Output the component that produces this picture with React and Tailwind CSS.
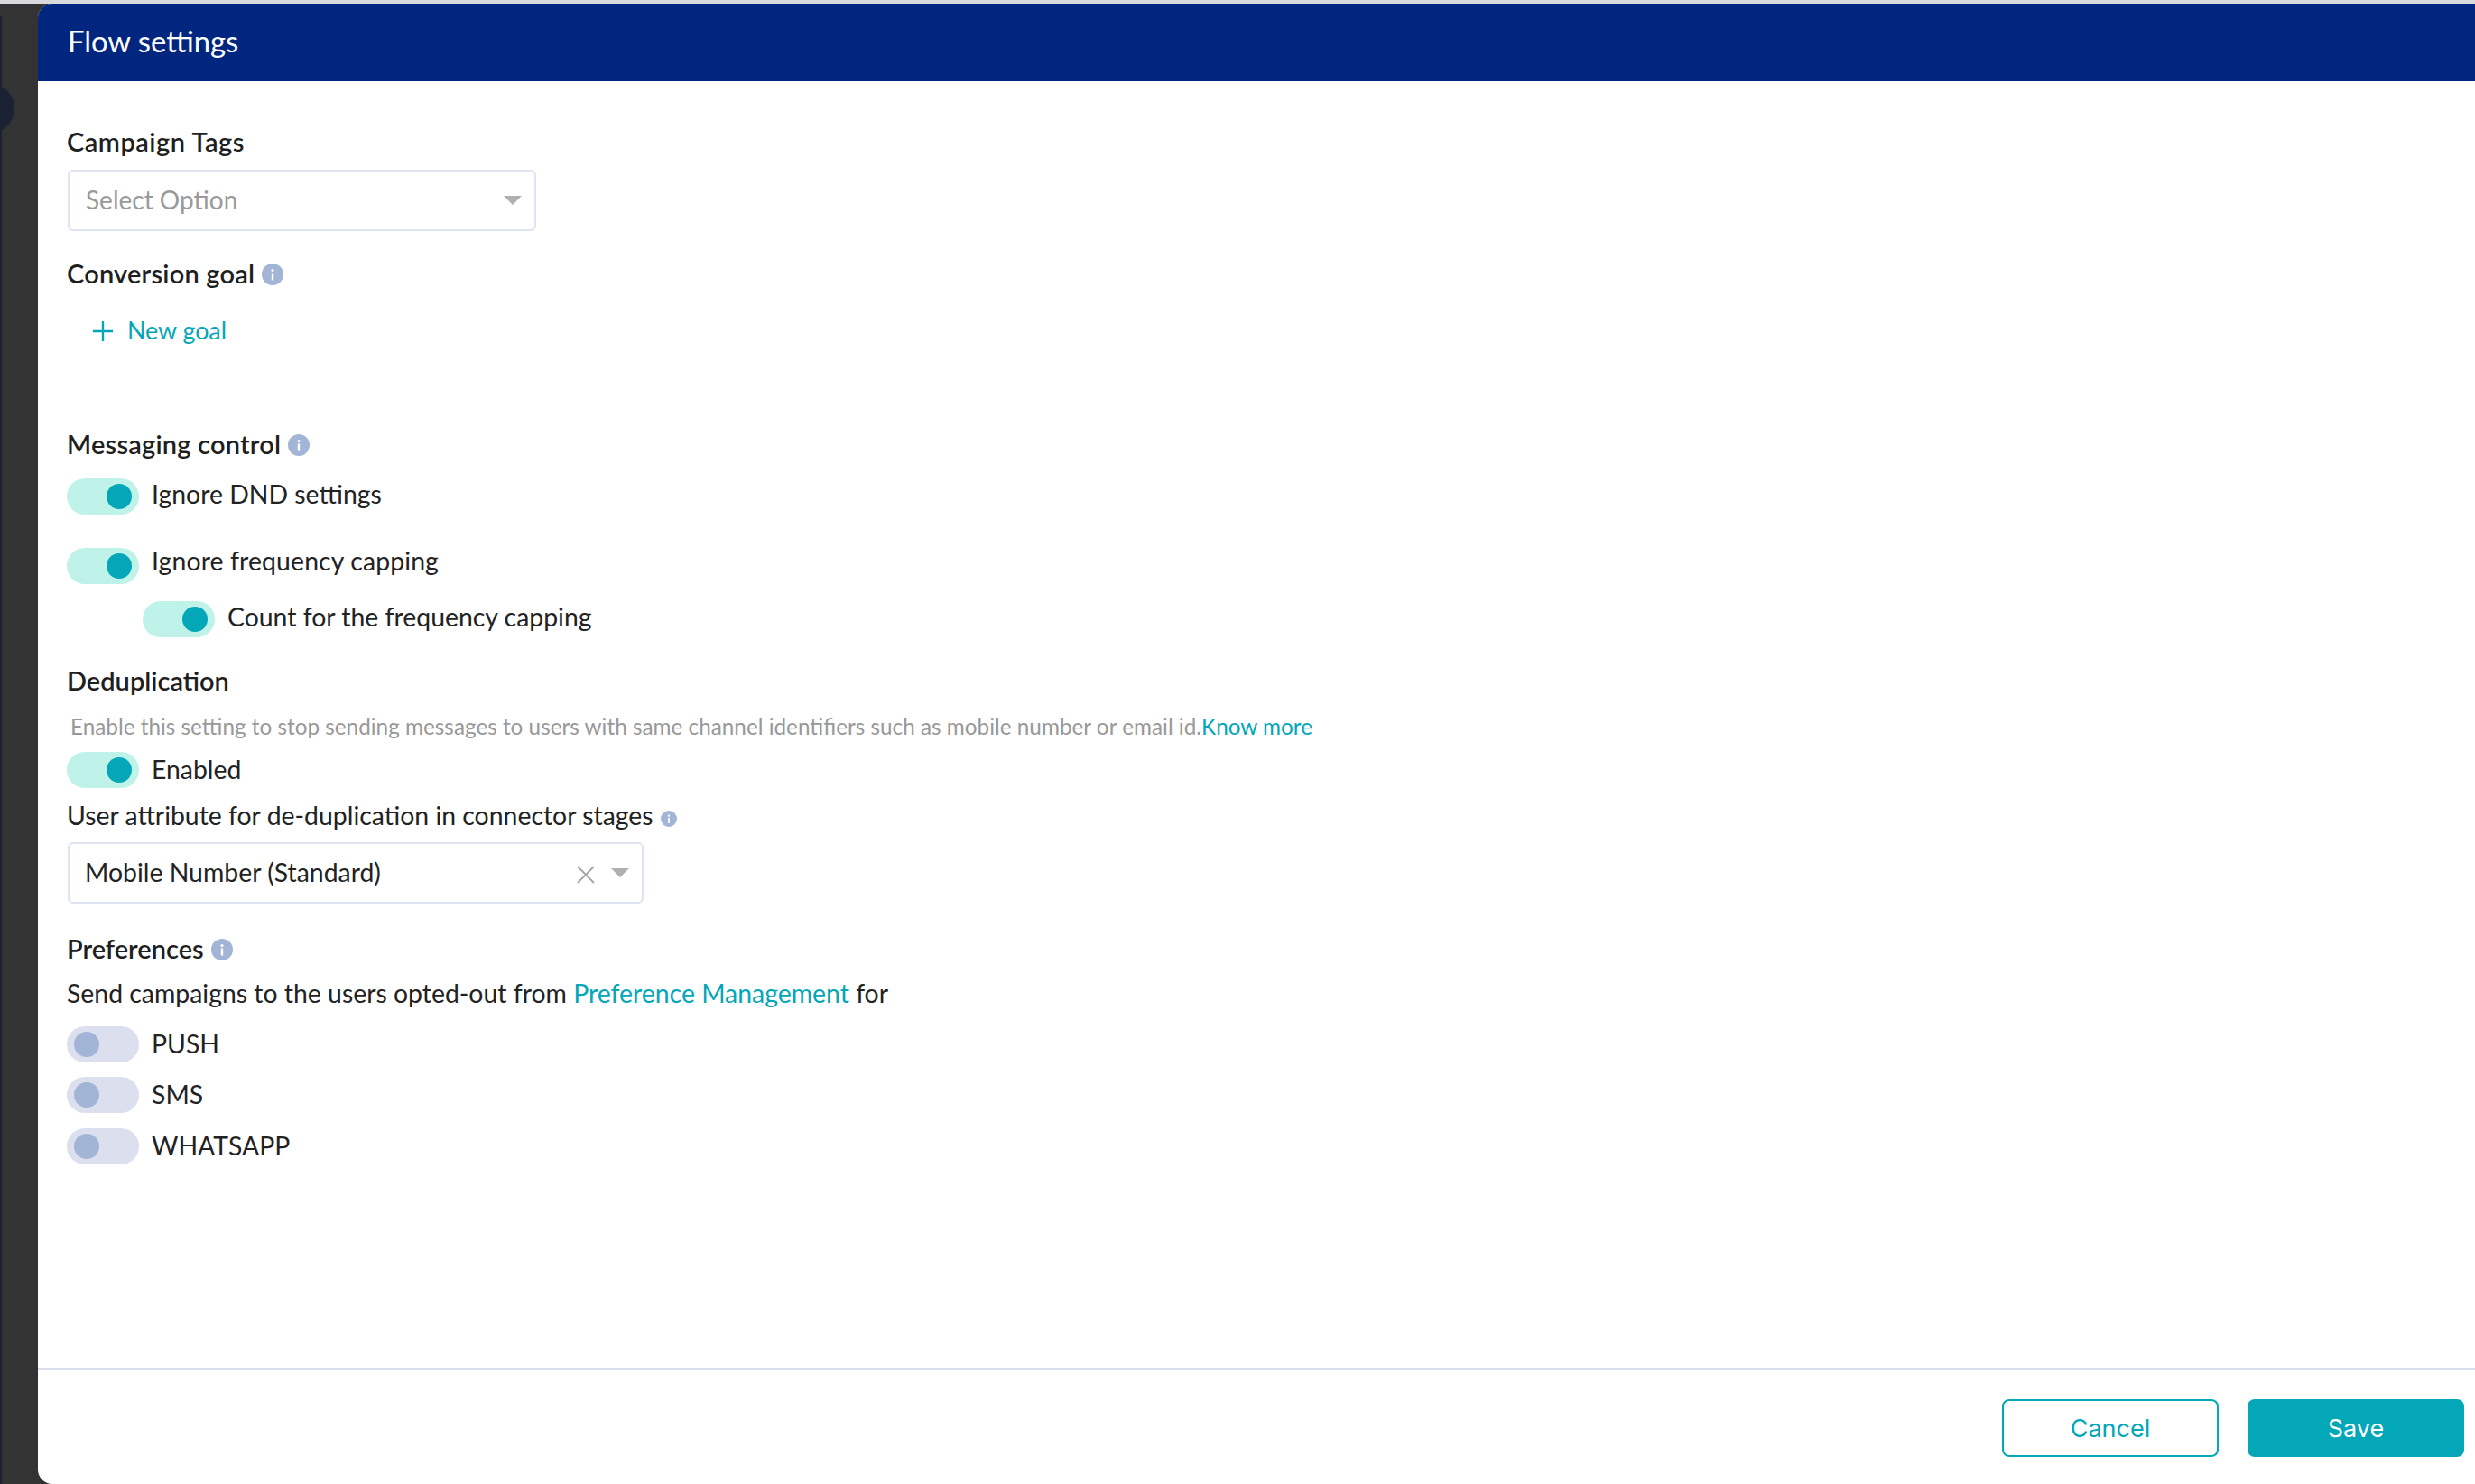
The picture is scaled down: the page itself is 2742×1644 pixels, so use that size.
const font = "font-['Lato',sans-serif]";

const InfoIcon = ({ size = "w-[24px] h-[24px]" }) => (
    <svg viewBox="0 0 24 24" className={size}>
        <circle cx="12" cy="12" r="12" fill="#a3b5d6" />
        <circle cx="12" cy="7.5" r="1.5" fill="#fff" />
        <rect x="10.8" y="10.5" width="2.4" height="8" fill="#fff" />
    </svg>
)

const Arrow = () => (
    <svg viewBox="0 0 20 10" className="w-[20px] h-[10px]">
        <path d="M0 0H20L10 10Z" fill="#b0b0b0" />
    </svg>
)

const Toggle = ({ on = true, label, className = "", labelClass = "-mt-[3px]" }) => (
    <div className={`flex items-center h-[40px] gap-[14px] ${className}`}>
        <div className={`w-[80px] h-[40px] rounded-full flex items-center px-[8px] ${on ? 'bg-[#bff3e9] justify-end' : 'bg-[#dbdfee] justify-start'}`}>
            <div className={`w-[28px] h-[28px] rounded-full ${on ? 'bg-[#03a7b8]' : 'bg-[#a3b5d6]'}`}></div>
        </div>
        <span className={`text-[28.4px] leading-[36px] text-[#222] ${labelClass}`}>{label}</span>
    </div>
)

const Heading = ({ children, info, className = "", titleClass = "tracking-[0.2px]" }) => (
    <div className={`flex items-center h-[36px] gap-[8px] -ml-[1px] ${className}`}>
        <h3 className={`text-[29px] leading-[36px] font-semibold text-[#1f1f1f] -mt-[3px] ${titleClass}`}>{children}</h3>
        {info && <InfoIcon />}
    </div>
)

const App = () => {
    return (
        <div className={`w-[2742px] h-[1644px] flex flex-col bg-[#333333] overflow-hidden ${font}`}>
            <div className="h-[4px] bg-[#d9dadd]"></div>
            <div className="flex flex-1 min-h-0">
                <div className="w-[42px] relative">
                    <div className="absolute left-0 top-[14px] bottom-0 w-[2px] bg-[#1a2233]"></div>
                    <div className="absolute -left-[40px] top-[88px] w-[56px] h-[56px] rounded-full bg-[#1a2233]"></div>
                </div>
                <div className="flex-1 flex flex-col bg-white rounded-l-[16px] overflow-hidden">
                    <header className="h-[86px] shrink-0 bg-[#00267f] flex items-center px-[33px]">
                        <h2 className="text-[32.8px] text-white -mt-[3px]">Flow settings</h2>
                    </header>

                    <div className="flex-1 px-[33px] pt-[50px]">
                        <Heading titleClass="tracking-[0.5px]">Campaign Tags</Heading>
                        <div className="mt-[12px] w-[519px] h-[68px] border-2 border-[#dfe3f2] rounded-[6px] flex items-center justify-between pl-[18px] pr-[14px]">
                            <span className="text-[28px] text-[#999] -mt-[2px]">Select Option</span>
                            <Arrow />
                        </div>

                        <Heading info className="mt-[30px]">Conversion goal</Heading>
                        <div className="mt-[27px] h-[36px] pl-[28px] flex items-center gap-[16px] text-[#03a7b8]">
                            <svg viewBox="0 0 22 22" className="w-[22px] h-[22px]">
                                <path d="M11 0V22M0 11H22" stroke="#03a7b8" strokeWidth="2.4" fill="none" />
                            </svg>
                            <span className="text-[26.8px] -mt-[2px]">New goal</span>
                        </div>

                        <Heading info className="mt-[90px]">Messaging control</Heading>
                        <Toggle label="Ignore DND settings" className="mt-[19px] -ml-[1px]" labelClass="-mt-[7px]" />
                        <Toggle label="Ignore frequency capping" className="mt-[37px] -ml-[1px]" labelClass="-mt-[13px] tracking-[0.12px]" />
                        <Toggle label="Count for the frequency capping" className="mt-[19px] ml-[83px]" labelClass="-mt-[7px]" />

                        <Heading className="mt-[31px]" titleClass="tracking-[0px]">Deduplication</Heading>
                        <p className="mt-[15px] h-[36px] leading-[34px] pl-[3px] text-[24.3px] text-[#999]">
                            Enable this setting to stop sending messages to users with same channel identifiers such as mobile number or email id.<a className="text-[#03a7b8]">Know more</a>
                        </p>
                        <Toggle label="Enabled" className="mt-[9px] -ml-[1px]" />
                        <div className="mt-[14px] h-[36px] flex items-center gap-[8px] -ml-[1px]">
                            <span className="text-[28.4px] text-[#222] -mt-[3px]">User attribute for de-duplication in connector stages</span>
                            <InfoIcon size="w-[18px] h-[18px] mt-[4px]" />
                        </div>
                        <div className="mt-[10px] w-[638px] h-[68px] border-2 border-[#dfe3f2] rounded-[6px] flex items-center pl-[17px] pr-[14px]">
                            <span className="text-[28.4px] text-[#222] flex-1 -mt-[2px]">Mobile Number (Standard)</span>
                            <svg viewBox="0 0 20 20" className="w-[20px] h-[20px] mr-[18px] mt-[4px]">
                                <path d="M1 1L19 19M19 1L1 19" stroke="#a8a8a8" strokeWidth="2" fill="none" />
                            </svg>
                            <Arrow />
                        </div>

                        <Heading info className="mt-[33px]" titleClass="tracking-[0px]">Preferences</Heading>
                        <p className="mt-[13px] h-[36px] leading-[34px] text-[28.4px] text-[#222] -ml-[1px]">
                            Send campaigns to the users opted-out from <a className="text-[#03a7b8]">Preference Management</a> for
                        </p>
                        <Toggle on={false} label="PUSH" className="mt-[18px] -ml-[1px]" />
                        <Toggle on={false} label="SMS" className="mt-[16px] -ml-[1px]" />
                        <Toggle on={false} label="WHATSAPP" className="mt-[17px] -ml-[1px]" />
                    </div>

                    <footer className="h-[128px] shrink-0 border-t-2 border-[#dce0ee] flex justify-end items-center gap-[32px] pr-[12px] pt-[2px] font-['Inter',sans-serif]">
                        <button className="w-[240px] h-[64px] rounded-[8px] border-2 border-[#03a7b8] text-[#03a7b8] text-[27px] pt-[2px]">Cancel</button>
                        <button className="w-[240px] h-[64px] rounded-[8px] bg-[#03a7b8] text-white text-[27px] pt-[2px]">Save</button>
                    </footer>
                </div>
            </div>
        </div>
    )
}
export default App
